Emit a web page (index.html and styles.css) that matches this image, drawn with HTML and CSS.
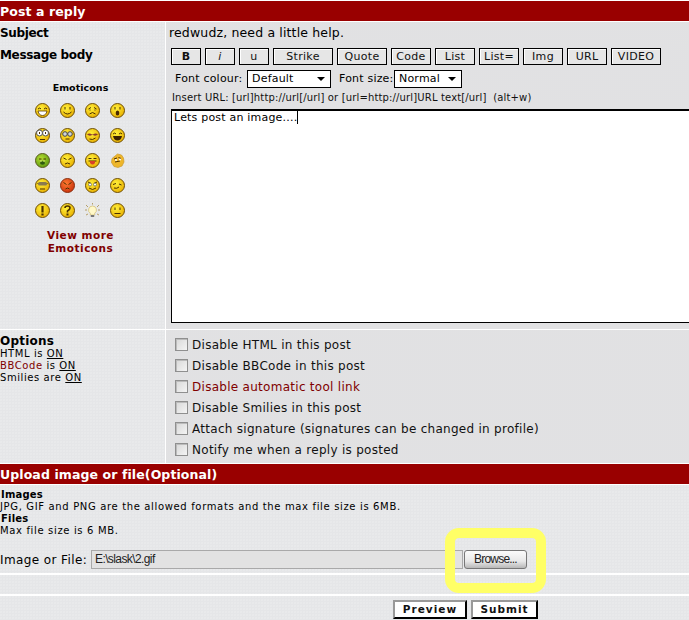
FILE: index.html
```html
<!DOCTYPE html>
<html lang="en">
<head>
<meta charset="utf-8">
<title>Post a reply</title>
<link rel="stylesheet" href="styles.css">
</head>
<body>
<svg class="defs" width="0" height="0" aria-hidden="true">
  <defs>
    <radialGradient id="y" cx="40%" cy="35%" r="70%"><stop offset="0" stop-color="#fff03a"/><stop offset="1" stop-color="#e8ae00"/></radialGradient>
    <radialGradient id="g" cx="40%" cy="35%" r="70%"><stop offset="0" stop-color="#b5dc30"/><stop offset="1" stop-color="#5c9a10"/></radialGradient>
    <radialGradient id="r" cx="40%" cy="35%" r="70%"><stop offset="0" stop-color="#ff7a30"/><stop offset="1" stop-color="#c8300c"/></radialGradient>
    <symbol id="f" viewBox="0 0 15 15"><circle cx="7.5" cy="7.5" r="7" fill="url(#y)" stroke="#6e4f08"/></symbol>
    <symbol id="fg" viewBox="0 0 15 15"><circle cx="7.5" cy="7.5" r="7" fill="url(#g)" stroke="#5a5a20"/></symbol>
    <symbol id="fr" viewBox="0 0 15 15"><circle cx="7.5" cy="7.5" r="7" fill="url(#r)" stroke="#8a3010"/></symbol>
  </defs>
</svg>
<main class="page">
  <h2 class="bar">Post a reply</h2>
  <section class="row subject">
    <div class="left"><b class="lbl">Subject</b></div>
    <div class="right subj-text">redwudz, need a little help.</div>
  </section>
  <section class="row message">
    <div class="left msg-left">
      <b class="lbl">Message body</b>
      <h3 class="emo-title">Emoticons</h3>
      <div class="emo-grid">
        <svg viewBox="0 0 15 15"><use href="#f"/><path d="M3 6q2-2 3 0M9 6q2-2 3 0" class="k"/><path d="M3 8h9q-1 4.500-4.500 4.500T3 8z" fill="#fff" stroke="#5a3a00" stroke-width=".8"/></svg>
        <svg viewBox="0 0 15 15"><use href="#f"/><path d="M5 4v2.500M10 4v2.500M3.500 9q4 4 8 0" class="k"/></svg>
        <svg viewBox="0 0 15 15"><use href="#f"/><path d="M3.500 6l2.500-1.500M11.500 6L9 4.500M5 6.500v1M10 6.500v1M4.500 11q3-3 6 0" class="k"/></svg>
        <svg viewBox="0 0 15 15"><use href="#f"/><path d="M5 4v2.500M10 4v2.500" class="k"/><ellipse cx="7.500" cy="10" rx="1.800" ry="2.500" fill="#4a2a00"/></svg>

        <svg viewBox="0 0 15 15"><use href="#f"/><circle cx="4.500" cy="5" r="3" fill="#fff" stroke="#555"/><circle cx="10.500" cy="5" r="3" fill="#fff" stroke="#555"/><path d="M4.500 4v2M10.500 4v2M5 11.500h5" class="k"/></svg>
        <svg viewBox="0 0 15 15"><use href="#f"/><circle cx="5" cy="6" r="2.300" fill="#cfd4d8" stroke="#444"/><circle cx="10" cy="6" r="2.300" fill="#cfd4d8" stroke="#444"/><path d="M5.500 11h4" class="k"/></svg>
        <svg viewBox="0 0 15 15"><use href="#f"/><path d="M2 6.500q2.500-2 5 0h1q2.500-2 5 0q-2.500 2-5 .5h-1q-2.500 1.500-5-.5z" fill="#8a3a30"/><path d="M4.500 11q3 1.500 6-1" class="k"/></svg>
        <svg viewBox="0 0 15 15"><use href="#f"/><path d="M3 6q2-2 3 0M9 6q2-2 3 0" class="k"/><path d="M3 8h9q-1 4.500-4.500 4.500T3 8z" fill="#3a2000"/></svg>

        <svg viewBox="0 0 15 15"><use href="#fg"/><path d="M4 6h2.500M8.500 6H11" class="k"/><ellipse cx="7.500" cy="10" rx="2.500" ry="1.800" fill="#2f5a10"/><path d="M6 7v2M9 7v2" stroke="#d8f080" stroke-width=".8"/></svg>
        <svg viewBox="0 0 15 15"><use href="#f"/><path d="M3.500 5l3 1.500M11.500 5l-3 1.500M5 11q2.500-2 5 0" class="k"/></svg>
        <svg viewBox="0 0 15 15"><use href="#f"/><path d="M3.500 5.500h3M8.500 5.500h3M3.500 8h8" class="k"/><path d="M5 8h5v2q-2.500 3-5 0z" fill="#d8402a"/></svg>
        <svg viewBox="0 0 15 15"><path d="M7.500 1l4 1 2 3 .5 4-2 4-4 1.500-4-1-2.500-4 .5-4z" fill="#eeb62a" stroke="#c89a30" stroke-width=".7"/><path d="M4 6l3-1M8.500 4.500l2.500 1M5 9l5-1" class="k"/><circle cx="6" cy="7" r="1" fill="#fff"/><circle cx="10" cy="6.500" r="1" fill="#fff"/></svg>

        <svg viewBox="0 0 15 15"><use href="#f"/><path d="M2.500 5.500h10" class="k"/><rect x="3" y="4" width="9" height="3.500" rx="1.500" fill="#8a7a50"/><path d="M5 11h5" class="k"/></svg>
        <svg viewBox="0 0 15 15"><use href="#fr"/><path d="M3.500 4.500l3 2M11.500 4.500l-3 2M5.500 11q2-2 4 0" class="k"/></svg>
        <svg viewBox="0 0 15 15"><use href="#f"/><path d="M3 4l3 1.500M12 4L9 5.500" class="k"/><circle cx="5" cy="6.500" r="1.500" fill="#fff" stroke="#444" stroke-width=".6"/><circle cx="10" cy="6.500" r="1.500" fill="#fff" stroke="#444" stroke-width=".6"/><path d="M4 10q3.500 3 7 0" class="k"/></svg>
        <svg viewBox="0 0 15 15"><use href="#f"/><path d="M3 6.500l3-1M9 6l2.500 1M4 10q3 1 5-1" class="k"/></svg>

        <svg viewBox="0 0 15 15"><use href="#f"/><path d="M7.500 3v6.500" stroke="#4a3000" stroke-width="2.200"/><rect x="6.400" y="10.500" width="2.200" height="2" fill="#4a3000"/></svg>
        <svg viewBox="0 0 15 15"><use href="#f"/><path d="M5 5q0-2 2.500-2t2.500 2q0 1.500-2.500 3v1.500" fill="none" stroke="#4a3000" stroke-width="1.600"/><rect x="6.500" y="10.500" width="2" height="2" fill="#4a3000"/></svg>
        <svg viewBox="0 0 15 15"><path d="M7.500 3a4 4 0 0 0-2.200 7.300V12h4.400v-1.700A4 4 0 0 0 7.500 3z" fill="#fff8c8" stroke="#c8b060" stroke-width=".6"/><rect x="5.800" y="12" width="3.400" height="2" fill="#777"/><path d="M1 2l2 2M14 2l-2 2M0 7h2M13 7h2M1 12l2-1M14 12l-2-1M7.500 0v1.500" stroke="#a08030" stroke-width=".7"/></svg>
        <svg viewBox="0 0 15 15"><use href="#f"/><path d="M5 4.500v2.500M10 4.500v2.500M4.500 10.500h6" class="k"/></svg>
      </div>
      <a class="more">View more<br>Emoticons</a>
    </div>
    <div class="right msg-right">
      <div class="btn-row">
        <button class="bb w30 bold">B</button><button class="bb w30 ital">i</button><button class="bb w30">u</button><button class="bb w60">Strike</button><button class="bb w50">Quote</button><button class="bb w40">Code</button><button class="bb w40">List</button><button class="bb w40">List=</button><button class="bb w40">Img</button><button class="bb w40">URL</button><button class="bb w50">VIDEO</button>
      </div>
      <div class="font-row">
        <span class="fc-label">Font colour:</span>
        <span class="sel sel-c">Default<i class="arrow"></i></span>
        <span class="fs-label">Font size:</span>
        <span class="sel sel-s">Normal<i class="arrow"></i></span>
      </div>
      <p class="hint">Insert URL: [url]http://url[/url] or [url=http://url]URL text[/url]&nbsp; (alt+w)</p>
      <div class="area">Lets post an image....<span class="caret"></span></div>
    </div>
  </section>
  <section class="row options">
    <div class="left">
      <b class="opt-title">Options</b>
      <p class="opt-line">HTML is <u>ON</u></p>
      <p class="opt-line"><span class="red">BBCode</span> is <u>ON</u></p>
      <p class="opt-line">Smilies are <u>ON</u></p>
    </div>
    <div class="right opt-list">
      <label class="chk"><input type="checkbox"><span>Disable HTML in this post</span></label>
      <label class="chk"><input type="checkbox"><span>Disable BBCode in this post</span></label>
      <label class="chk"><input type="checkbox"><span class="red">Disable automatic tool link</span></label>
      <label class="chk"><input type="checkbox"><span>Disable Smilies in this post</span></label>
      <label class="chk"><input type="checkbox"><span>Attach signature (signatures can be changed in profile)</span></label>
      <label class="chk"><input type="checkbox"><span>Notify me when a reply is posted</span></label>
    </div>
  </section>
  <h2 class="bar bar-upload">Upload image or file(Optional)</h2>
  <section class="upload">
    <b class="up-b">Images</b>
    <p class="up-p">JPG, GIF and PNG are the allowed formats and the max file size is 6MB.</p>
    <b class="up-b">Files</b>
    <p class="up-p">Max file size is 6 MB.</p>
    <div class="file-row">
      <span class="file-label">Image or File:</span>
      <span class="file-input">E:\slask\2.gif</span>
      <button class="browse">Browse...</button>
    </div>
  </section>
  <div class="spacer"></div>
  <div class="submit-row">
    <button class="act act-p">Preview</button><button class="act act-s">Submit</button>
  </div>
  <div class="highlight"></div>
</main>
</body>
</html>
```

FILE: styles.css
```css
* { box-sizing: border-box; }
html, body { margin: 0; padding: 0; height: 620px; overflow: hidden; background: #fff; }
body { font-family: "DejaVu Sans", Verdana, sans-serif; color: #000; }
.defs { position: absolute; }
.page { position: relative; width: 689px; height: 620px; padding-top: 1px; overflow: hidden; }
.bar {
  margin: 0; height: 20px; background: #990000; color: #fff; padding-top: 1px;
  font-size: 12.500px; font-weight: bold; line-height: 20px; letter-spacing: .1px;
}
.row { display: grid; grid-template-columns: 165px 1fr; column-gap: 1px; margin-top: 1px; }
.left, .upload, .spacer, .submit-row {
  background-color: #e5e6e8;
  background-image: radial-gradient(circle at 1px 1px, #ececed .6px, transparent .8px);
  background-size: 3px 3px;
}
.right {
  background-color: #dfe0e1;
  background-image: radial-gradient(circle at 1px 1px, #e3e3e4 .6px, transparent .8px);
  background-size: 2px 2px;
  min-width: 0;
}
.subject { height: 20px; }
.lbl { font-size: 12px; letter-spacing: -.35px; line-height: 22px; display: block; }
.subj-text { font-size: 12.500px; line-height: 22px; padding-left: 3px; letter-spacing: .15px; white-space: nowrap; }
.message { height: 286px; }
.msg-left { padding-top: 1px; }
.emo-title { margin: 16px 0 0; font-size: 9.500px; line-height: 12px; text-align: center; width: 161px; letter-spacing: .05px; }
.emo-grid {
  display: grid; grid-template-columns: repeat(4, 15px); column-gap: 10px; row-gap: 10px;
  margin: 9px 0 0 35px;
}
.emo-grid svg { width: 15px; height: 15px; display: block; }
.k { fill: none; stroke: #4a3000; stroke-width: 1; }
.more {
  display: block; margin-top: 11px; width: 161px; text-align: center;
  color: #800000; font-weight: bold; font-size: 10.500px; line-height: 13px; letter-spacing: .5px;
}
.msg-right { padding: 5px 0 0 5px; overflow: hidden; }
.btn-row { display: flex; gap: 4px; height: 17px; }
.bb {
  height: 17px; padding: 0; margin: 0; background: #e6e6e6; border: 1px solid #000;
  box-shadow: inset 1px 1px 0 #fff;
  font: 11px/15px "DejaVu Sans", sans-serif; letter-spacing: .3px; color: #111; flex: none;
}
.w30 { width: 30px; } .w40 { width: 40px; } .w50 { width: 50px; } .w60 { width: 60px; }
.bold { font-weight: bold; } .ital { font-style: italic; }
.font-row { display: flex; align-items: center; height: 19px; margin-top: 4px; font-size: 11px; }
.fc-label { margin-left: 4px; width: 72px; letter-spacing: .2px; white-space: nowrap; }
.fs-label { margin-left: 8px; width: 55px; white-space: nowrap; letter-spacing: .2px; }
.sel {
  position: relative; display: block; height: 18px; background: #fff; border: 1px solid #000;
  font-size: 11px; line-height: 16px; padding-left: 4px; letter-spacing: .2px;
}
.sel-c { width: 84px; }
.sel-s { width: 68px; }
.arrow {
  position: absolute; right: 5px; top: 6px; width: 0; height: 0;
  border: 4px solid transparent; border-top: 4px solid #000; border-bottom: 0;
}
.hint { margin: 4px 0 0 1px; font-size: 10px; line-height: 12px; white-space: nowrap; letter-spacing: .15px; color: #111; }
.area {
  margin-top: 5px; width: 530px; height: 214px; background: #fff; border: 1px solid #000; border-top-width: 2px;
  font-size: 11px; line-height: 13px; padding: 0 2px; letter-spacing: .2px;
}
.caret { display: inline-block; width: 1px; height: 13px; background: #000; vertical-align: top; }
.options { height: 133px; }
.options .left { padding-top: 4px; }
.opt-title { display: block; font-size: 12px; line-height: 14px; letter-spacing: .2px; }
.opt-line { margin: 0; font-size: 10px; line-height: 12px; letter-spacing: .58px; }
.red { color: #800000; }
.opt-list { padding: 4px 0 0 9px; }
.chk { display: flex; align-items: center; gap: 4px; height: 21px; font-size: 12px; letter-spacing: .28px; white-space: nowrap; color: #111; }
.chk input {
  appearance: none; margin: 0; width: 13px; height: 13px; flex: none;
  background: linear-gradient(135deg, #d8d8d8, #f4f4f4); border: 1px solid #8f8f8f;
  box-shadow: inset 1px 1px 0 #bbb;
}
.bar-upload { margin-top: 1px; }
.upload { margin-top: 1px; height: 88px; padding: 4px 0 0 1px; }
.up-b { display: block; font-size: 10px; line-height: 12px; letter-spacing: .2px; }
.up-p { margin: 0 0 0 -1px; font-size: 10px; line-height: 12px; letter-spacing: .65px; white-space: nowrap; }
.file-row { display: flex; align-items: center; height: 19px; margin-top: 13px; margin-left: -1px; }
.file-label { width: 91px; font-size: 12px; letter-spacing: .4px; white-space: nowrap; }
.file-input {
  width: 372px; height: 19px; background: #e2e2e2; border: 1px solid #a9a9a9;
  font: 12px/17px "Liberation Sans", sans-serif; letter-spacing: -.6px; padding-left: 3px; color: #222;
}
.browse {
  margin: 0 0 0 1px; width: 63px; height: 19px; padding: 0; border: 1px solid #777; border-radius: 3px;
  background: linear-gradient(#fbfbfb, #e8e8e8 60%, #b8b8b8);
  font: 12px/17px "Liberation Sans", sans-serif; letter-spacing: -.8px; color: #222;
}
.spacer { margin-top: 2px; height: 19px; }
.submit-row { margin-top: 2px; height: 24px; padding: 4px 0 0 393px; display: flex; gap: 4px; }
.act {
  height: 19px; padding: 0; margin: 0; background: #fff; color: #111;
  border: 2px solid #000; border-left-color: #999; border-top-color: #999;
  font: bold 10.500px/15px "DejaVu Sans", sans-serif; letter-spacing: 1px;
}
.act-p { width: 74px; }
.act-s { width: 67px; }
.highlight {
  position: absolute; left: 445px; top: 528px; width: 101px; height: 65px;
  border: 10px solid #ffff66; border-radius: 14px; pointer-events: none;
}
```
